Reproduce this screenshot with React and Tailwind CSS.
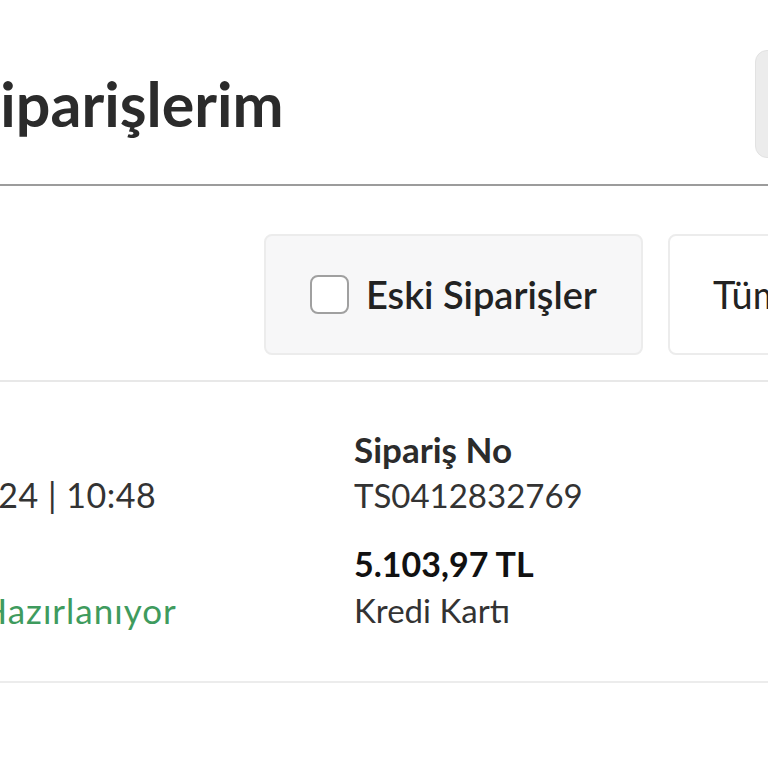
import React from "react";

const font = { fontFamily: "Lato, 'Open Sans', sans-serif" };

export default function App() {
  return (
    <div className="w-[768px] h-[768px] overflow-hidden bg-white" style={font}>
      {/* header */}
      <div className="flex items-start h-[186px] border-b-2 border-[#9c9c9c]">
        <h1 className="mt-[68px] -ml-[33px] text-[61px] leading-[72px] font-bold text-[#2b2b2b] whitespace-nowrap">
          Siparişlerim
        </h1>
        <div className="ml-auto mt-[50px] -mr-[40px] w-[53px] h-[108px] rounded-xl bg-[#ececec] border border-[#e2e2e2]" />
      </div>

      {/* filters */}
      <div className="flex gap-[25px] pl-[264px] pt-[48px] pb-[25px] border-b-2 border-[#e8e8e8] whitespace-nowrap">
        <label className="flex shrink-0 items-center w-[379px] h-[121px] pl-[44px] rounded-lg bg-[#f7f7f8] border-2 border-[#ececec]">
          <span className="w-[39px] h-[39px] rounded-lg border-2 border-[#a0a0a0] bg-white" />
          <span className="ml-[17px] text-[38px] font-semibold text-[#222]">Eski Siparişler</span>
        </label>
        <div className="flex shrink-0 items-center w-[300px] h-[121px] pl-[43px] rounded-lg bg-white border-2 border-[#ececec]">
          <span className="text-[38px] text-[#222]">Tüm Siparişler</span>
        </div>
      </div>

      {/* order row */}
      <div className="flex pt-[44px] pb-[48px] border-b-2 border-[#ececec] text-[33px] leading-[46px] whitespace-nowrap">
        <div className="shrink-0 -ml-[140px] w-[494px] flex flex-col items-start">
          <span className="text-[34px] font-bold text-[#2b2b2b]">Tarih</span>
          <span className="text-[34px] tracking-[0.5px] text-[#333]">12.04.2024 | 10:48</span>
          <span className="mt-[23px] text-[34px] font-bold text-[#111]">Durum</span>
          <span className="ml-[3px] text-[35px] tracking-[1px] text-[#3f9b5e]">Sipariş Hazırlanıyor</span>
        </div>
        <div className="flex flex-col items-start">
          <span className="text-[35px] font-bold text-[#2b2b2b]">Sipariş No</span>
          <span className="text-[#333]">TS0412832769</span>
          <span className="mt-[23px] text-[34px] font-bold text-[#111]">5.103,97 TL</span>
          <span className="text-[#333]">Kredi Kartı</span>
        </div>
      </div>
    </div>
  );
}
